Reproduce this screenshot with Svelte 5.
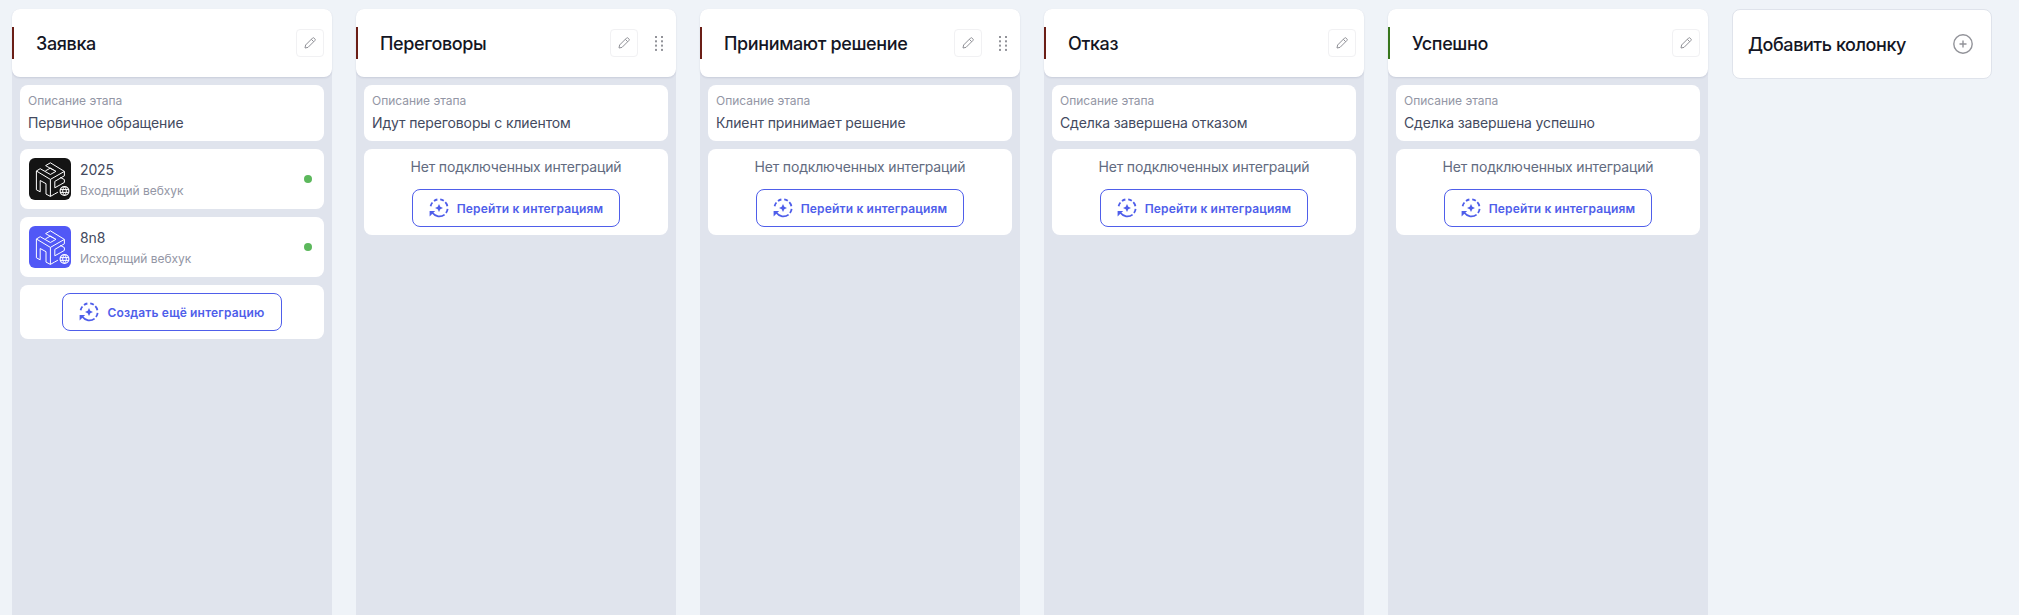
<script lang="ts">
  interface Integration {
    name: string
    type: string
    color: string
  }

  interface Stage {
    title: string
    description: string
    color: string
    draggable?: boolean
    integrations: Integration[]
  }

  const stages: Stage[] = [
    {
      title: "Заявка",
      description: "Первичное обращение",
      color: "#6b1e16",
      integrations: [
        { name: "2025", type: "Входящий вебхук", color: "#141414" },
        { name: "8n8", type: "Исходящий вебхук", color: "#5158f6" },
      ],
    },
    {
      title: "Переговоры",
      description: "Идут переговоры с клиентом",
      color: "#6b1e16",
      draggable: true,
      integrations: [],
    },
    {
      title: "Принимают решение",
      description: "Клиент принимает решение",
      color: "#6b1e16",
      draggable: true,
      integrations: [],
    },
    {
      title: "Отказ",
      description: "Сделка завершена отказом",
      color: "#6b1e16",
      integrations: [],
    },
    {
      title: "Успешно",
      description: "Сделка завершена успешно",
      color: "#38761d",
      integrations: [],
    },
  ]
</script>

{#snippet integrationButton(label: string)}
  <button class="btn-integration">
    <svg width="20" height="20" viewBox="0 0 20 20" fill="none" stroke="currentColor" stroke-width="1.8">
      <path d="M1.6 8.2a8.6 8.6 0 0 1 1.8-3.7M5 3a8.6 8.6 0 0 1 3.4-1.5M11.2 1.4a8.6 8.6 0 0 1 3.6 1.4M16.3 4.2a8.6 8.6 0 0 1 2.1 4M18.6 10.8a8.6 8.6 0 0 1-1.6 4.2M15.6 16.6a8.6 8.6 0 0 1-12.2-1.8" />
      <path d="M.6 13h5.6l-1.7 1.6L2.6 16.6.6 18.4z" fill="currentColor" stroke="none" />
      <path d="M10 6l1.3 2.7L14 10l-2.7 1.3L10 14l-1.3-2.7L6 10l2.7-1.3z" fill="currentColor" stroke="none" />
    </svg>
    <span>{label}</span>
  </button>
{/snippet}

<div class="board">
  {#each stages as stage}
    <section class="column">
      <header class="column-header">
        <i class="marker" style="background: {stage.color}"></i>
        <h2>{stage.title}</h2>
        <button class="btn-edit" aria-label="Редактировать">
          <svg width="12" height="12" viewBox="0 0 12 12" fill="none" stroke="currentColor" stroke-linejoin="round">
            <path d="M1 11l.6-3L8.5 1.1a1.1 1.1 0 0 1 1.6 0l.8.8a1.1 1.1 0 0 1 0 1.6L4 10.4z" />
            <path d="M7.3 2.3l2.4 2.4" />
          </svg>
        </button>
        {#if stage.draggable}
          <svg class="handle" width="8" height="15" viewBox="0 0 8 15" fill="currentColor">
            {#each [0, 4.3, 8.6, 12.9] as y}
              <rect x="0" {y} width="2" height="2" />
              <rect x="6" {y} width="2" height="2" />
            {/each}
          </svg>
        {/if}
      </header>

      <div class="column-body">
        <div class="card description">
          <small>Описание этапа</small>
          <p>{stage.description}</p>
        </div>

        {#each stage.integrations as item}
          <div class="card integration">
            <svg class="logo" width="42" height="42" viewBox="0 0 42 42" fill="none" stroke="#fff" stroke-linejoin="round">
              <rect width="42" height="42" rx="6" fill={item.color} stroke="none" />
              <path d="M7.4 13v18.8l3.8 2V22.5l5.8 3.2v10.4l4.4 2.3 3.9-2.2 3.6-2M7.4 13l3.8-2.3 10.2 5.8 5.6-3.2-5.6-3.2-5 2.8M21.4 21.4L7.4 13M21.4 21.4v17M21.4 21.4l14-8v4.4l-9.6 5.6v6.4l5.4-3M35.4 21.6l-4.2-2.2M31.2 26.8l4.2-2.4v-2.8M16.6 7.6l4.8-2.8 14 8.6M16.6 7.6l8 4.6" />
              <circle cx="35.5" cy="33" r="5.6" fill={item.color} stroke="none" />
              <circle cx="35.5" cy="33" r="4.4" stroke-width="1.2" />
              <path d="M31.2 31.6h8.6M31.2 34.4h8.6M35.5 28.7c-2.4 2.6-2.4 6 0 8.6c2.4-2.6 2.4-6 0-8.6" />
            </svg>
            <div class="info">
              <p>{item.name}</p>
              <small>{item.type}</small>
            </div>
            <i class="status"></i>
          </div>
        {/each}

        {#if stage.integrations.length}
          <div class="card actions">
            {@render integrationButton("Создать ещё интеграцию")}
          </div>
        {:else}
          <div class="card empty">
            <p>Нет подключенных интеграций</p>
            {@render integrationButton("Перейти к интеграциям")}
          </div>
        {/if}
      </div>
    </section>
  {/each}

  <button class="add-column">
    <span>Добавить колонку</span>
    <svg width="20" height="20" viewBox="0 0 20 20" fill="none" stroke="currentColor" stroke-width="1.4">
      <circle cx="10" cy="10" r="9.2" />
      <path d="M10 6.5v7M6.5 10h7" />
    </svg>
  </button>
</div>

<style>
  :global(body) {
    background: #eff3f8;
    overflow: hidden;
  }

  .board {
    display: flex;
    align-items: flex-start;
    gap: 24px;
    box-sizing: border-box;
    height: 100vh;
    padding: 9px 12px 0;
    font-family: Inter, "Noto Sans", sans-serif;
    color: #434a60;
  }

  button {
    font-family: inherit;
    cursor: pointer;
  }

  h2,
  p {
    margin: 0;
    font-weight: 400;
  }

  .column {
    flex: 0 0 320px;
    height: 100%;
    border-radius: 8px 8px 0 0;
    background: #e0e4ed;
  }

  .column-header {
    display: flex;
    align-items: center;
    box-sizing: border-box;
    height: 68px;
    padding-right: 8px;
    border-radius: 8px;
    background: #fff;
    box-shadow: 0 1px 2px rgba(30, 41, 80, 0.12);
  }

  .marker {
    width: 2px;
    height: 32px;
  }

  h2 {
    flex: 1;
    padding-left: 22px;
    font-size: 18px;
    font-weight: 500;
    letter-spacing: -0.37px;
    color: #141624;
  }

  .btn-edit {
    display: flex;
    align-items: center;
    justify-content: center;
    width: 28px;
    height: 28px;
    padding: 0;
    border: 1px solid #f1f1f3;
    border-radius: 4px;
    background: #fff;
    color: #8f9096;
  }

  .handle {
    margin: 0 5px 0 17px;
    color: #929399;
  }

  .column-body {
    display: flex;
    flex-direction: column;
    gap: 8px;
    padding: 8px;
  }

  .card {
    box-sizing: border-box;
    padding: 8px;
    border-radius: 8px;
    background: #fff;
  }

  .card p {
    font-size: 14px;
    line-height: 20px;
    letter-spacing: -0.13px;
  }

  .card small {
    display: block;
    font-size: 12px;
    line-height: 16px;
    letter-spacing: -0.02px;
    color: #9396a5;
  }

  .description {
    height: 56px;
  }

  .description p {
    margin-top: 4px;
  }

  .integration {
    display: flex;
    align-items: center;
    height: 60px;
    padding: 8px 12px 8px 9px;
  }

  .info {
    flex: 1;
    margin-left: 9px;
  }

  .info small {
    margin-top: 3px;
  }

  .status {
    width: 8px;
    height: 8px;
    border-radius: 50%;
    background: #5cb85c;
  }

  .actions,
  .empty {
    display: flex;
    flex-direction: column;
    align-items: center;
  }

  .empty p {
    margin-bottom: 12px;
    letter-spacing: -0.17px;
    color: #626b80;
  }

  .btn-integration {
    display: flex;
    align-items: center;
    gap: 8px;
    height: 38px;
    padding: 0 16px;
    border: 1px solid #4f5eea;
    border-radius: 8px;
    background: #fff;
    color: #4f5eea;
    font-size: 12px;
    font-weight: 600;
    letter-spacing: 0.17px;
    white-space: nowrap;
  }

  .add-column {
    display: flex;
    align-items: center;
    justify-content: space-between;
    flex: 0 0 260px;
    box-sizing: border-box;
    height: 70px;
    padding: 0 18px 0 15px;
    border: 1px solid #dfe3eb;
    border-radius: 8px;
    background: #fff;
    color: #141624;
    font-size: 18px;
    font-weight: 500;
    letter-spacing: -0.44px;
  }

  .add-column svg {
    color: #929399;
  }
</style>
